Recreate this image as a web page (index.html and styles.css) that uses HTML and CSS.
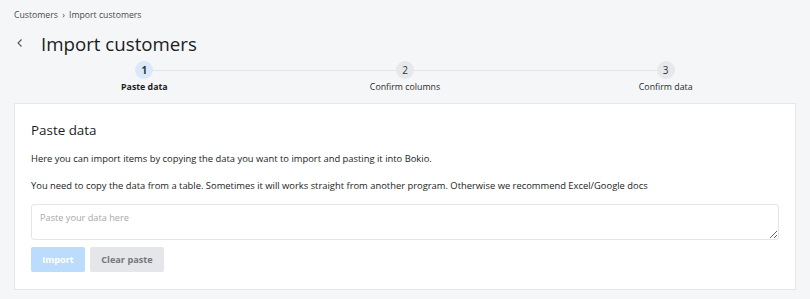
FILE: index.html
```html
<!DOCTYPE html>
<html lang="en">
<head>
    <meta charset="UTF-8">
    <title>Import customers</title>
    <link rel="stylesheet" href="styles.css">
</head>
<body>

<div class="page">
    <div class="breadcrumb">
        <a href="#">Customers</a>
        <span class="sep">&rsaquo;</span>
        <span>Import customers</span>
    </div>

    <div class="title_row">
        <a href="#" class="back">
            <svg width="10" height="10" viewBox="0 0 10 10"><path d="M6.5 1.5 L3 5 L6.5 8.5" fill="none" stroke="#555" stroke-width="1.1"/></svg>
        </a>
        <h1>Import customers</h1>
    </div>

    <div class="steps">
        <div class="step active">
            <div class="circle">1</div>
            <div class="label">Paste data</div>
        </div>
        <div class="step">
            <div class="circle">2</div>
            <div class="label">Confirm columns</div>
        </div>
        <div class="step">
            <div class="circle">3</div>
            <div class="label">Confirm data</div>
        </div>
    </div>

    <div class="card">
        <h2>Paste data</h2>
        <p class="intro">Here you can import items by copying the data you want to import and pasting it into Bokio.</p>
        <p>You need to copy the data from a table. Sometimes it will works straight from another program. Otherwise we recommend Excel/Google docs</p>
        <textarea placeholder="Paste your data here"></textarea>
        <div class="buttons">
            <button class="btn_primary" disabled>Import</button>
            <button class="btn_secondary">Clear paste</button>
        </div>
    </div>
</div>

</body>
</html>
```

FILE: styles.css
```css
body{
    margin: 0;
    background-color: #f5f6f8;
    font-family: "Open Sans", "Noto Sans", sans-serif;
    color: #1c1c1c;
}

.page{
    padding: 8px 14px 10px 14px;
}

.breadcrumb{
    font-size: 8.7px;
    color: #4a4a4a;
    height: 14px;
    line-height: 14px;
}

.breadcrumb a{
    color: #4a4a4a;
    text-decoration: none;
}

.breadcrumb .sep{
    margin: 0 2px;
}

.title_row{
    display: flex;
    align-items: center;
    margin-top: 9px;
    height: 24px;
}

.back{
    display: flex;
    width: 26px;
    padding-left: 1px;
}

.title_row h1{
    margin: 0;
    font-size: 18.7px;
    font-weight: 400;
    color: #1c1c1c;
}

.steps{
    display: flex;
    margin-top: 6px;
    position: relative;
}

.step{
    flex: 1;
    display: flex;
    flex-direction: column;
    align-items: center;
    position: relative;
}

.step::before{
    content: "";
    position: absolute;
    top: 9px;
    left: 0;
    right: 0;
    height: 1px;
    background-color: #e3e5e8;
}

.step:first-child::before{
    left: 50%;
}

.step:last-child::before{
    right: 50%;
}

.circle{
    position: relative;
    width: 18px;
    height: 18px;
    border-radius: 50%;
    background-color: #e6e8eb;
    font-size: 10px;
    line-height: 18px;
    text-align: center;
    color: #333;
}

.step.active .circle{
    background-color: #d9e8fb;
    font-weight: 700;
}

.label{
    font-size: 8.8px;
    line-height: 12px;
    margin-top: 2px;
    color: #2a2a2a;
}

.step.active .label{
    font-weight: 700;
    color: #1c1c1c;
}

.card{
    margin-top: 10px;
    background-color: #fff;
    border: 1px solid #e4e6e9;
    padding: 16px 16px 17px 16px;
}

.card h2{
    margin: 0;
    font-size: 13.4px;
    font-weight: 400;
    line-height: 20px;
}

.card p{
    font-size: 9.4px;
    margin: 14px 0 0 0;
    line-height: 13px;
    color: #1c1c1c;
}

.card p.intro{
    margin-top: 12px;
}

textarea{
    display: block;
    box-sizing: border-box;
    width: 100%;
    height: 36px;
    margin-top: 12px;
    border: 1px solid #e3e5e8;
    border-radius: 3px;
    padding: 6px 8px;
    font-family: "Open Sans", "Noto Sans", sans-serif;
    font-size: 9.2px;
    resize: vertical;
}

textarea::placeholder{
    color: #a8a8a8;
}

.buttons{
    display: flex;
    gap: 5px;
    margin-top: 7px;
}

.buttons button{
    height: 25px;
    border: 0;
    border-radius: 2px;
    font-family: "Open Sans", "Noto Sans", sans-serif;
    font-size: 9.2px;
    font-weight: 700;
}

.btn_primary{
    width: 54px;
    background-color: #bcdcfd;
    color: #fff;
}

.btn_secondary{
    width: 74px;
    background-color: #e4e6e9;
    color: #777;
}
```
